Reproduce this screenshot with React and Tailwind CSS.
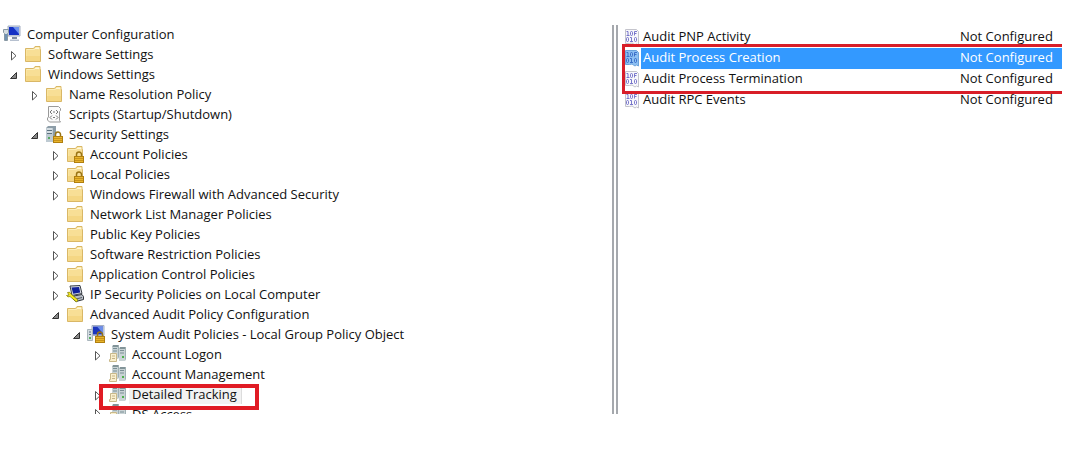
import React, { useState } from 'react';

const tree = [
  {
    name: 'Computer Configuration',
    icon: 'computer',
    root: true,
    children: [
      { name: 'Software Settings', collapsed: true },
      {
        name: 'Windows Settings',
        children: [
          { name: 'Name Resolution Policy', collapsed: true },
          { name: 'Scripts (Startup/Shutdown)', icon: 'script' },
          {
            name: 'Security Settings',
            icon: 'security',
            children: [
              { name: 'Account Policies', icon: 'lockedFolder', collapsed: true },
              { name: 'Local Policies', icon: 'lockedFolder', collapsed: true },
              { name: 'Windows Firewall with Advanced Security', collapsed: true },
              { name: 'Network List Manager Policies' },
              { name: 'Public Key Policies', collapsed: true },
              { name: 'Software Restriction Policies', collapsed: true },
              { name: 'Application Control Policies', collapsed: true },
              { name: 'IP Security Policies on Local Computer', icon: 'ipsec', collapsed: true },
              {
                name: 'Advanced Audit Policy Configuration',
                children: [
                  {
                    name: 'System Audit Policies - Local Group Policy Object',
                    icon: 'systemAudit',
                    children: [
                      { name: 'Account Logon', icon: 'audit', collapsed: true },
                      { name: 'Account Management', icon: 'audit' },
                      { name: 'Detailed Tracking', icon: 'audit', collapsed: true, selected: true },
                      { name: 'DS Access', icon: 'audit', collapsed: true, cut: true }
                    ]
                  }
                ]
              }
            ]
          }
        ]
      }
    ]
  }
];

const before = [{ name: 'Audit PNP Activity', value: 'Not Configured' }];
const marked = [
  { name: 'Audit Process Creation', value: 'Not Configured' },
  { name: 'Audit Process Termination', value: 'Not Configured' }
];
const after = [{ name: 'Audit RPC Events', value: 'Not Configured' }];

function Folder() {
  return (
    <g>
      <path d="M1.5 3.5h8l1.5-2h5v3h.5v12h-15z" fill="#f8df96" stroke="#d9b766" />
      <path d="M2.5 4.5h8l1.5-2h3v2" fill="none" stroke="#fbeebb" />
      <path d="M11 3.5h4" stroke="#fff8dc" />
      <path d="M2.5 5v10.5" stroke="#fae5a0" />
      <path d="M2 11h14v5H2z" fill="#efca68" opacity="0.4" />
    </g>
  );
}

function Lock() {
  return (
    <g>
      <path d="M10.5 11.5V9.500a2.5 2.5 0 0 1 5 0v2" fill="none" stroke="#9a7414" strokeWidth="1.5" />
      <rect x="8.5" y="11.5" width="9" height="6" fill="#e8b52c" stroke="#b07f10" />
      <path d="M9 13.5h8M9 15.5h8" stroke="#c8921a" />
    </g>
  );
}

function Tower({ x, y }) {
  return (
    <g transform={`translate(${x} ${y})`}>
      <path d="M0 1.500l1-1.500h6v12l-1 2H0z" fill="#9fb0b3" />
      <path d="M0 2h6v12H0z" fill="#c9d3d5" />
      <path d="M1 1h5" stroke="#66797e" />
      <path d="M1 3.500h4M1 6h4" stroke="#7b8f95" />
      <path d="M3 9h2v2H3z" fill="#4fb04c" />
    </g>
  );
}

const icons = {
  folder: <Folder />,
  lockedFolder: (
    <g>
      <Folder />
      <Lock />
    </g>
  ),
  computer: (
    <g>
      <path d="M5 1h12v10H5z" fill="#d3dae6" stroke="#a3aec2" />
      <path d="M6 2h10v8H6z" fill="#1531c4" />
      <path d="M10 2h6v7z" fill="#6e92ee" />
      <path d="M9 12h5v2H9z" fill="#7f8ca0" />
      <path d="M7 14.5h9v1.5H7z" fill="#b6c0cf" />
      <path d="M.5 4.5h5v3l-1 1v7h-3v-7l-1-1z" fill="#d5dde2" stroke="#8898a3" />
      <path d="M2 9h2v6H2z" fill="#6f93b4" />
    </g>
  ),
  script: (
    <g>
      <path d="M3.5 1.5h10l2 2v2l-1 1v9l1 1.5h-11l-2-2v-2l1-1z" fill="#fbfbfb" stroke="#9a9a9a" />
      <path d="M7 5L5 7l2 2M11 5l2 2-2 2M8 7h2M7 10.5l-2 2 2 2M11 10.5l2 2-2 2M8 12.5h2" fill="none" stroke="#777" />
    </g>
  ),
  security: (
    <g>
      <path d="M1 3l2-2h8v14l-2 2H1z" fill="#8d9da8" />
      <path d="M1 3h7v14H1z" fill="#becad2" />
      <path d="M2 5.5h5M2 8.5h5" stroke="#5c717e" />
      <path d="M2 4h5M2 7h5" stroke="#edf2f4" />
      <path d="M3 12h2v2H3z" fill="#56a961" />
      <Lock />
    </g>
  ),
  ipsec: (
    <g>
      <path d="M4 1l10-.5 2 8-10 2z" fill="#d6dae0" stroke="#3b4048" />
      <path d="M5.5 2.5l7.5-.5 1.2 5.5-7 1.2z" fill="#10209a" />
      <path d="M8 11l8-1.5 1.5 2v3L10 16.5l-3-2.5z" fill="#b8bec7" stroke="#33373d" />
      <path d="M10 14l6-1.5" stroke="#555b64" />
      <path d="M1.5 7.500a2.5 2.5 0 0 1 3.5 1.500l7 6-1.5 2L4 11.500a2.5 2.5 0 0 1-3.5-1l2.5-.5z" fill="#f6ec1e" stroke="#7c7608" strokeWidth="0.7" />
    </g>
  ),
  systemAudit: (
    <g>
      <path d="M5 .5h12v10H5z" fill="#d3dae6" stroke="#a3aec2" />
      <path d="M6 1.5h10v8H6z" fill="#1c36bc" />
      <path d="M10 1.5h6v7z" fill="#6c8eea" />
      <path d="M.5 4.5h5v11h-5z" fill="#d5dde2" stroke="#a9b5bc" />
      <path d="M2 7h2M2 9.5h2" stroke="#5f7384" />
      <path d="M2 12h2v2H2z" fill="#54b05d" />
      <Lock />
    </g>
  ),
  audit: (
    <g>
      <Tower x={4} y={0} />
      <Tower x={11} y={2} />
      <path d="M2.5 8.5h6v8h-7v-2h1z" fill="#faf0cf" stroke="#c9b98a" />
      <path d="M4 11h3M4 13.5h3" stroke="#c4b385" />
    </g>
  )
};

function TreeIcon({ name }) {
  return (
    <svg className="w-[18px] h-[18px] shrink-0" viewBox="0 0 18 18" aria-hidden="true">
      {icons[name || 'folder']}
    </svg>
  );
}

function PolicyIcon({ selected }) {
  return (
    <svg className="block w-4 h-[18px]" viewBox="0 0 16 18" aria-hidden="true">
      <path
        d="M1.5 1.5h11l2 2v13.500l-2-1-1.5 1-3-2-2.5.5H1.500z"
        fill={selected ? '#8ec0f2' : '#f8f8fb'}
        stroke={selected ? '#6da4dc' : '#c4c4cc'}
      />
      <g fill="none" stroke={selected ? '#3468c4' : '#6c6ac6'} strokeWidth="0.9">
        <path d="M2.5 3.5h1.500v4M2.5 7.5h3M10.5 7.500v-4H13M10.5 5.500h2" />
        <rect x="6.5" y="3.5" width="2" height="4" rx="1" />
        <rect x="2.5" y="9.5" width="2" height="4" rx="1" />
        <path d="M6 9.5h1.500v4M6 13.5h3" />
        <rect x="10.5" y="9.5" width="2" height="4" rx="1" />
      </g>
    </svg>
  );
}

function TreeNode({ node }) {
  const [open, setOpen] = useState(!node.collapsed);
  const expandable = node.children || node.collapsed;

  return (
    <li>
      <div className={`relative flex ${node.cut ? 'h-[10px] overflow-hidden items-start' : 'h-5 items-center'}`}>
        {!node.root && (
          <span className="w-[21px] shrink-0 flex justify-center">
            {expandable && (
              <button aria-label={`Toggle ${node.name}`} onClick={() => setOpen(!open)} className="pt-1">
                <svg className="block w-2 h-3" viewBox="0 0 8 12">
                  {open ? (
                    <path d="M6.5 2.5v6h-6z" fill="#888" stroke="#333" />
                  ) : (
                    <path d="M1.5 1.5v8.500l4.5-4.250z" fill="#fff" stroke="#555" />
                  )}
                </svg>
              </button>
            )}
          </span>
        )}
        <TreeIcon name={node.icon} />
        <span
          className={`ml-[3px] pl-[3px] pr-1 leading-5 whitespace-nowrap ${
            node.selected ? 'bg-[#f2f2f2] border-r border-[#dcdcdc]' : ''
          }`}
        >
          {node.name}
        </span>
        {node.selected && (
          <span className="absolute top-0 -bottom-[6px] left-3 w-40 border-4 border-[#e01b24] pointer-events-none z-10"></span>
        )}
      </div>
      {node.children && open && (
        <ul className={node.root ? '' : 'pl-[21px]'}>
          {node.children.map((child) => (
            <TreeNode key={child.name} node={child} />
          ))}
        </ul>
      )}
    </li>
  );
}

function PolicyRow({ policy, selected, onSelect, children }) {
  const highlight = selected ? 'bg-[#3399ff] text-white' : '';

  return (
    <tr className="h-[21px] cursor-default" onClick={() => onSelect(policy.name)}>
      <td className="w-[23px] pl-[6px] pb-[2px]">
        <PolicyIcon selected={selected} />
        {children}
      </td>
      <td className={`pl-[2px] pb-[2px] leading-[19px] ${highlight}`}>{policy.name}</td>
      <td className={`w-[102px] pb-[2px] leading-[19px] whitespace-nowrap ${highlight}`}>{policy.value}</td>
    </tr>
  );
}

function App() {
  const [current, setCurrent] = useState('Audit Process Creation');

  const renderRow = (policy, extra) => (
    <PolicyRow key={policy.name} policy={policy} selected={policy.name === current} onSelect={setCurrent}>
      {extra}
    </PolicyRow>
  );

  return (
    <div className="min-h-screen bg-white pt-6 pr-[14px] flex items-start text-[13px] text-[#111] font-['Open_Sans','Noto_Sans',sans-serif]">
      <main className="flex flex-1 items-stretch">
        {/* Policy tree */}
        <nav className="w-[612px] shrink pl-[3px]" aria-label="Policy tree">
          <ul>
            {tree.map((node) => (
              <TreeNode key={node.name} node={node} />
            ))}
          </ul>
        </nav>

        {/* Splitter */}
        <div className="w-[6px] shrink-0 mt-px border-x-2 border-[#a5a8ad]"></div>

        {/* Subcategories */}
        <section className="flex-1 pt-[3px]">
          <table className="w-full border-collapse">
            <tbody>{before.map((policy) => renderRow(policy))}</tbody>
            <tbody className="relative">
              {marked.map((policy, i) =>
                renderRow(
                  policy,
                  i === 0 && (
                    <span className="absolute -top-1 -bottom-1 left-1 right-0 border-3 border-r-0 border-[#d81e28] pointer-events-none"></span>
                  )
                )
              )}
            </tbody>
            <tbody>{after.map((policy) => renderRow(policy))}</tbody>
          </table>
        </section>
      </main>
    </div>
  );
}

export default App;
